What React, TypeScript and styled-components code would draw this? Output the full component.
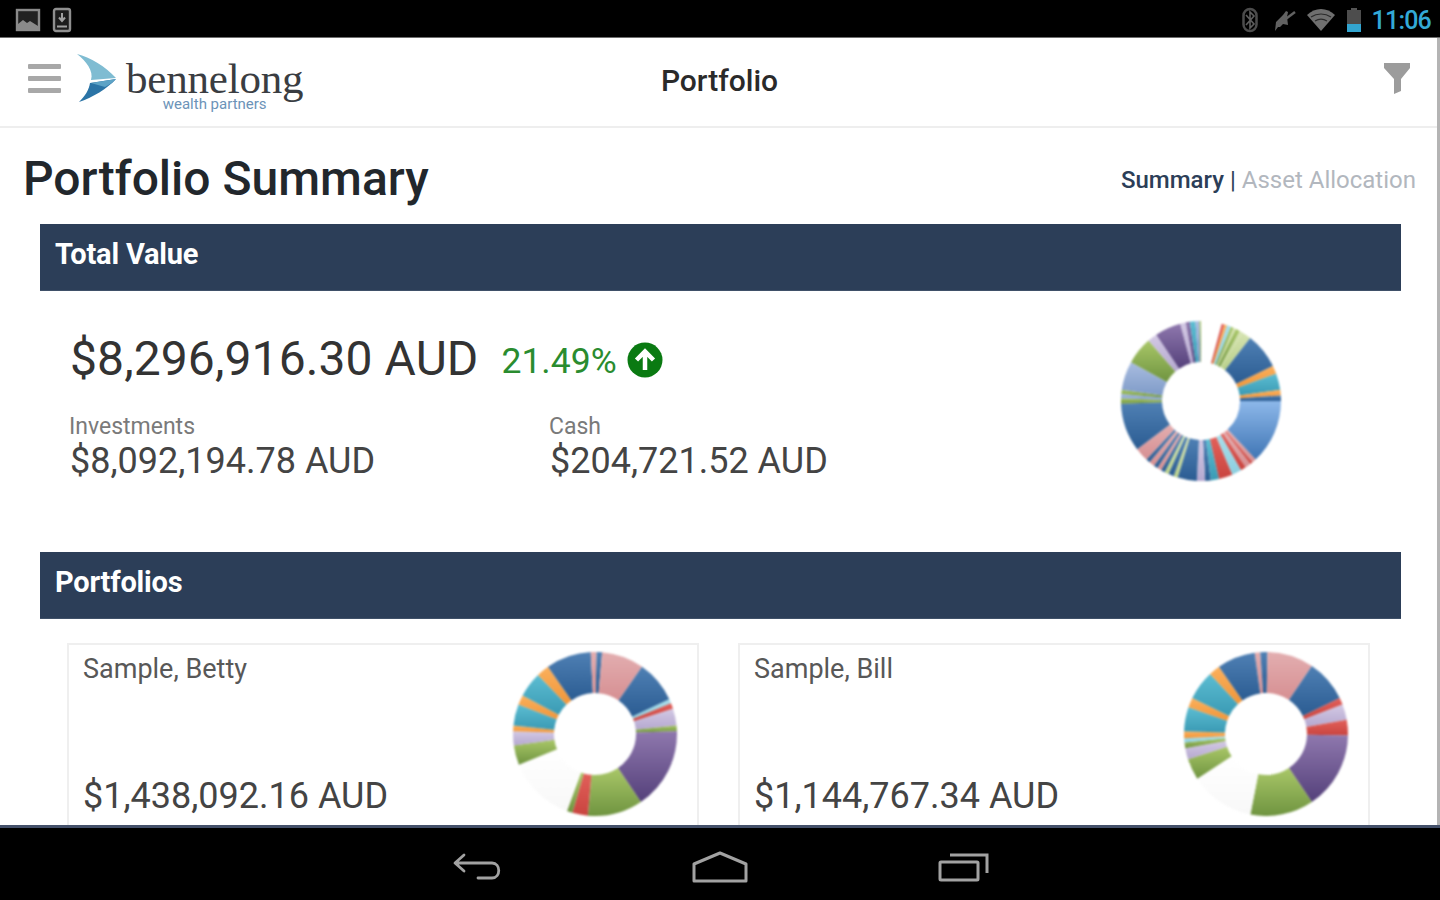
import React from "react";
import styled, { createGlobalStyle } from "styled-components";

type Slice = [number, number, string];

const palette: Record<string, [string, string]> = {
  blue: ["#4f80b4", "#2b5c92"],
  sky: ["#8db8ea", "#3f75b4"],
  peri: ["#a9bde0", "#7f9bc8"],
  pink: ["#e3aeb0", "#d68f92"],
  red: ["#e2605a", "#c9443f"],
  green: ["#a9c768", "#6f9440"],
  pale: ["#d5e3b0", "#b9d08a"],
  purple: ["#8f78ae", "#54407a"],
  lilac: ["#d3c9e4", "#b5a8d0"],
  teal: ["#5cbdd2", "#3a9ab4"],
  cyan: ["#a8deea", "#8ccfe0"],
  orange: ["#fbb05c", "#f0963a"],
  mist: ["#ffffff", "#f8f8f8"],
};

const totalSlices: Slice[] = [
  [15, 17, "red"], [17, 19, "orange"], [19, 22, "cyan"], [22, 24, "green"], [24, 26, "pale"],
  [26, 29, "green"], [29, 31, "pale"], [31, 38, "pale"], [38, 64, "blue"], [64, 70, "orange"],
  [70, 82, "teal"], [82, 86, "orange"], [86, 90, "blue"], [90, 137, "sky"], [137, 140, "pink"],
  [140, 142, "red"], [142, 146, "pink"], [146, 150, "red"], [150, 157, "cyan"], [157, 167, "red"],
  [167, 173, "teal"], [173, 177, "blue"], [177, 183, "lilac"], [183, 197, "blue"], [197, 200, "pale"],
  [200, 204, "blue"], [204, 207, "pale"], [207, 210, "blue"], [210, 213, "pink"], [213, 216, "blue"],
  [216, 220, "pink"], [220, 223, "blue"], [223, 233, "pink"], [233, 268, "blue"], [268, 272, "green"],
  [272, 275, "peri"], [275, 278, "green"], [278, 299, "peri"], [299, 319, "green"], [319, 326, "lilac"],
  [326, 345, "purple"], [345, 349, "lilac"], [349, 352, "purple"], [352, 356, "teal"], [356, 359, "peri"],
  [359, 360, "green"],
];

const bettySlices: Slice[] = [
  [1, 5, "blue"], [5, 35, "pink"], [35, 65, "blue"], [65, 68, "cyan"], [68, 72, "red"],
  [72, 84, "lilac"], [84, 88, "green"], [88, 146, "purple"], [146, 185, "green"], [185, 196, "red"],
  [196, 200, "green"], [200, 248, "mist"], [248, 262, "green"], [262, 272, "lilac"], [272, 276, "orange"],
  [276, 291, "teal"], [291, 298, "orange"], [298, 316, "teal"], [316, 325, "orange"], [325, 357, "blue"],
  [357, 361, "pink"],
];

const billSlices: Slice[] = [
  [352, 356, "pink"], [356, 361, "blue"], [1, 34, "pink"], [34, 64, "blue"], [64, 69, "red"],
  [69, 80, "lilac"], [80, 91, "red"], [91, 146, "purple"], [146, 191, "green"], [191, 237, "mist"],
  [237, 252, "green"], [252, 260, "lilac"], [260, 264, "green"], [264, 267, "cyan"], [267, 272, "orange"],
  [272, 289, "teal"], [289, 296, "orange"], [296, 317, "teal"], [317, 325, "orange"], [325, 352, "blue"],
];

const point = (cx: number, cy: number, r: number, deg: number) => {
  const a = ((deg - 90) * Math.PI) / 180;
  return `${(cx + r * Math.cos(a)).toFixed(2)} ${(cy + r * Math.sin(a)).toFixed(2)}`;
};

const slicePath = (from: number, to: number, outer: number, inner: number) => {
  const c = outer + 1;
  const large = to - from > 180 ? 1 : 0;
  return `M${point(c, c, outer, from)} A${outer} ${outer} 0 ${large} 1 ${point(c, c, outer, to)} L${point(c, c, inner, to)} A${inner} ${inner} 0 ${large} 0 ${point(c, c, inner, from)} Z`;
};

const Donut: React.FC<{ id: string; slices: Slice[]; outer: number; inner: number; small?: boolean }> = ({
  id,
  slices,
  outer,
  inner,
  small,
}) => {
  const size = outer * 2 + 2;
  return (
    <DonutSvg $lifted={small} width={size} height={size} viewBox={`0 0 ${size} ${size}`}>
      <defs>
        {Object.entries(palette).map(([name, [top, bottom]]) => (
          <linearGradient key={name} id={`${id}-${name}`} x1="0" y1="0" x2="0" y2="1">
            <stop offset="0" stopColor={top} />
            <stop offset="1" stopColor={bottom} />
          </linearGradient>
        ))}
      </defs>
      {slices.map(([from, to, color]) => (
        <path key={`${from}-${color}`} d={slicePath(from, to, outer, inner)} fill={`url(#${id}-${color})`} />
      ))}
    </DonutSvg>
  );
};

const App: React.FC = () => (
  <>
    <GlobalStyle />
    <Screen>
      <StatusBar>
        <StatusGroup>
          <svg width="28" height="26" viewBox="0 0 28 26">
            <rect x="3" y="3" width="22" height="20" fill="#222" stroke="#8a8a8a" strokeWidth="2.4" />
            <path d="M4 22v-5l5-4 4 3 3-2 8 5v3z" fill="#8a8a8a" />
          </svg>
          <svg width="20" height="26" viewBox="0 0 20 26">
            <rect x="2" y="2" width="16" height="22" rx="2" fill="#1c1c1c" stroke="#8f8f8f" strokeWidth="2.4" />
            <path d="M10 6v7M7 10.500l3 3.500 3-3.500M5 19.500h10" fill="none" stroke="#a0a0a0" strokeWidth="2" />
          </svg>
        </StatusGroup>
        <StatusGroup>
          <svg width="18" height="26" viewBox="0 0 18 26">
            <rect x="2.500" y="2" width="13" height="22" rx="6.500" fill="none" stroke="#4c4c4c" strokeWidth="2.500" />
            <path d="M5 8l8 9-4 4V5l4 4-8 9" fill="none" stroke="#5e5e5e" strokeWidth="1.600" />
          </svg>
          <MutedIcon width="26" height="26" viewBox="0 0 26 26">
            <path d="M5 24l1-9 7-7 3-4 2 1-1 5 1 8-5-1-3 3-2 0z" fill="#626262" />
            <path d="M9 17L25 5" stroke="#626262" strokeWidth="2.400" />
          </MutedIcon>
          <svg width="30" height="24" viewBox="0 0 30 24">
            <path d="M1 7C9-1 21-1 29 7L15 23z" fill="#6f6f6f" />
            <path d="M5 9c6-4 14-4 20 0M9 13c4-2.500 8-2.500 12 0" fill="none" stroke="#2b2b2b" strokeWidth="1.200" />
          </svg>
          <svg width="16" height="26" viewBox="0 0 16 26">
            <rect x="5" y="1" width="6" height="3" fill="#555" />
            <rect x="1" y="3" width="14" height="22" fill="#4d4d4d" />
            <rect x="1" y="17" width="14" height="8" fill="#33a5d0" />
          </svg>
          <Clock>11:06</Clock>
        </StatusGroup>
      </StatusBar>

      <Content>
        <AppBar>
          <BrandRow>
            <Hamburger>
              <span />
              <span />
              <span />
            </Hamburger>
            <Logo>
              <LogoMark width="42" height="50" viewBox="0 0 42 50">
                <path d="M1 1C14 4 30 14 40 25L15 27C18 18 10 8 1 1z" fill="#7fbcd2" />
                <path d="M14 30L40 26C32 35 16 45 3 49C9 43 13 37 14 30z" fill="#2b74a6" />
                <path d="M15 30L40 26C37 29 33 32 29 34z" fill="#5da3c6" />
              </LogoMark>
              <LogoText>
                <LogoName>bennelong</LogoName>
                <LogoTag>wealth partners</LogoTag>
              </LogoText>
            </Logo>
          </BrandRow>
          <AppTitle>Portfolio</AppTitle>
          <FilterSlot>
            <svg width="28" height="32" viewBox="0 0 28 32">
              <path d="M1 1h26v5l-9 11v12l-7 3V17L1 6z" fill="#9c9c9c" />
            </svg>
          </FilterSlot>
        </AppBar>

        <Main>
          <TitleRow>
            <PageTitle>Portfolio Summary</PageTitle>
            <Tabs>
              <ActiveTab>Summary</ActiveTab>
              <TabDivider> | </TabDivider>
              <span>Asset Allocation</span>
            </Tabs>
          </TitleRow>

          <SectionBar>Total Value</SectionBar>
          <TotalBody>
            <TotalFigures>
              <TotalLine>
                <TotalAmount>$8,296,916.30 AUD</TotalAmount>
                <Change>21.49%</Change>
                <svg width="36" height="36" viewBox="0 0 36 36">
                  <circle cx="18" cy="18" r="17.500" fill="#0a7a12" />
                  <path d="M18 28V10M9.500 18L18 9.500 26.500 18" fill="none" stroke="#fff" strokeWidth="4.500" />
                </svg>
              </TotalLine>
              <Breakdown>
                <Figure>
                  <FigureLabel>Investments</FigureLabel>
                  <FigureValue>$8,092,194.78 AUD</FigureValue>
                </Figure>
                <Figure>
                  <FigureLabel>Cash</FigureLabel>
                  <FigureValue>$204,721.52 AUD</FigureValue>
                </Figure>
              </Breakdown>
            </TotalFigures>
            <Donut id="total" slices={totalSlices} outer={80} inner={39} />
          </TotalBody>

          <SectionBar>Portfolios</SectionBar>
          <CardGrid>
            <Card>
              <CardText>
                <CardName>Sample, Betty</CardName>
                <CardValue>$1,438,092.16 AUD</CardValue>
              </CardText>
              <Donut id="betty" slices={bettySlices} outer={82} inner={41} small />
            </Card>
            <Card>
              <CardText>
                <CardName>Sample, Bill</CardName>
                <CardValue>$1,144,767.34 AUD</CardValue>
              </CardText>
              <Donut id="bill" slices={billSlices} outer={82} inner={41} small />
            </Card>
          </CardGrid>
        </Main>
      </Content>

      <NavBar>
        <BackIcon width="52" height="32" viewBox="0 0 52 32">
          <path d="M12 4L3 12l9 8M4 12h36c9 0 9 15 0 15H26" fill="none" stroke="#a2a2a2" strokeWidth="2.800" strokeLinecap="round" strokeLinejoin="round" />
        </BackIcon>
        <svg width="56" height="32" viewBox="0 0 56 32">
          <path d="M2 13L28 2l26 11v17H2z" fill="none" stroke="#a2a2a2" strokeWidth="3" strokeLinejoin="round" />
        </svg>
        <svg width="52" height="32" viewBox="0 0 52 32">
          <rect x="2" y="11" width="38" height="18" rx="1" fill="none" stroke="#a2a2a2" strokeWidth="3" />
          <path d="M12 4h37v18" fill="none" stroke="#a2a2a2" strokeWidth="3" />
        </svg>
      </NavBar>
    </Screen>
  </>
);

export default App;

const GlobalStyle = createGlobalStyle`
  html, body {
    margin: 0;
    background: #000;
  }
  * {
    box-sizing: border-box;
  }
`;

const Screen = styled.div`
  width: 1440px;
  height: 900px;
  display: flex;
  flex-direction: column;
  overflow: hidden;
  background: #fff;
  font-family: Roboto, "Liberation Sans", sans-serif;
`;

const StatusBar = styled.div`
  height: 38px;
  flex: none;
  display: flex;
  align-items: center;
  justify-content: space-between;
  padding: 2px 9px 0 14px;
  background: #000;
  border-bottom: 1px solid #6e6e6e;
`;

const StatusGroup = styled.div`
  display: flex;
  align-items: center;
  gap: 10px;
  svg {
    filter: blur(0.7px);
  }
`;

const MutedIcon = styled.svg`
  margin-left: 1px;
`;

const Clock = styled.span`
  color: #33a9d6;
  font-size: 25px;
  font-weight: 500;
  line-height: 1;
  letter-spacing: -0.8px;
  margin-top: 2px;
`;

const Content = styled.div`
  flex: 1;
  min-height: 0;
  display: flex;
  flex-direction: column;
  border-right: 3px solid #b4b4b4;
`;

const AppBar = styled.header`
  height: 90px;
  flex: none;
  display: grid;
  grid-template-columns: 1fr auto 1fr;
  align-items: center;
  padding: 0 26px 3px 28px;
  border-bottom: 2px solid #eeeeee;
`;

const BrandRow = styled.div`
  display: flex;
  align-items: center;
  gap: 18px;
`;

const Hamburger = styled.div`
  width: 33px;
  display: flex;
  flex-direction: column;
  gap: 7px;
  margin-top: -4px;
  span {
    height: 5px;
    background: #a8a8a8;
    border-radius: 1px;
  }
`;

const Logo = styled.div`
  display: flex;
  align-items: center;
  gap: 7px;
  margin-left: -3px;
`;

const LogoMark = styled.svg`
  filter: blur(0.5px);
  margin-top: -6px;
`;

const LogoText = styled.div`
  display: flex;
  flex-direction: column;
  align-items: center;
  margin: 7px 0 -3px 1px;
`;

const LogoName = styled.span`
  font-family: "Liberation Serif", serif;
  font-size: 43px;
  line-height: 36px;
  letter-spacing: -0.2px;
  color: #3a3d42;
`;

const LogoTag = styled.span`
  font-size: 15px;
  line-height: 14px;
  color: #6c93b8;
`;

const AppTitle = styled.h1`
  margin: 0;
  font-size: 30px;
  font-weight: 500;
  color: #2a2a2a;
`;

const FilterSlot = styled.div`
  display: flex;
  justify-content: flex-end;
  margin-top: -6px;
  svg {
    filter: blur(0.5px);
  }
`;

const Main = styled.main`
  flex: 1;
  min-height: 0;
  overflow: hidden;
  padding: 0 36px 0 40px;
`;

const TitleRow = styled.div`
  height: 96px;
  margin: 0 -15px 0 -16px;
  display: flex;
  align-items: center;
  justify-content: space-between;
  padding-top: 5px;
`;

const PageTitle = styled.h2`
  margin: 0 0 0 -1px;
  font-size: 48px;
  font-weight: 500;
  color: #22272c;
`;

const Tabs = styled.div`
  font-size: 24px;
  color: #b2b7be;
  margin-top: 3px;
`;

const ActiveTab = styled.span`
  color: #2c3e58;
  font-weight: 500;
`;

const TabDivider = styled.span`
  color: #2c3e58;
`;

const SectionBar = styled.div`
  height: 67px;
  padding: 14px 15px 0;
  background: #2c3e58;
  border-bottom: 1px solid #3f5068;
  color: #fff;
  font-size: 29px;
  line-height: 32px;
  font-weight: 700;
  letter-spacing: -0.2px;
`;

const TotalBody = styled.section`
  height: 261px;
  display: flex;
  align-items: flex-start;
  justify-content: space-between;
  padding: 29px 119px 0 29px;
`;

const TotalFigures = styled.div`
  display: flex;
  flex-direction: column;
`;

const TotalLine = styled.div`
  display: flex;
  align-items: center;
  gap: 10px;
  height: 70px;
  padding-top: 10px;
`;

const TotalAmount = styled.span`
  font-size: 48px;
  font-weight: 400;
  letter-spacing: 0.1px;
  color: #333;
  margin: -4px 13px 0 1px;
`;

const Change = styled.span`
  font-size: 35.500px;
  color: #2a8c2f;
  margin-top: 2px;
`;

const Breakdown = styled.div`
  display: flex;
  margin-top: 23px;
`;

const Figure = styled.div`
  width: 480px;
  display: flex;
  flex-direction: column;
`;

const FigureLabel = styled.span`
  font-size: 23px;
  line-height: 28px;
  color: #7a7a7a;
`;

const FigureValue = styled.span`
  font-size: 36px;
  line-height: 40px;
  color: #444;
  margin-left: 1px;
`;

const DonutSvg = styled.svg<{ $lifted?: boolean }>`
  flex: none;
  filter: blur(0.8px);
  margin: ${(p) => (p.$lifted ? "-2px -1px 0 0" : "0")};
`;

const CardGrid = styled.div`
  display: grid;
  grid-template-columns: 632px 632px;
  justify-content: space-between;
  padding: 24px 31px 0 27px;
`;

const Card = styled.article`
  height: 200px;
  display: flex;
  align-items: flex-start;
  justify-content: space-between;
  padding: 8px 20px 0 14px;
  border: 2px solid #efefef;
`;

const CardText = styled.div`
  height: 163px;
  display: flex;
  flex-direction: column;
  justify-content: space-between;
`;

const CardName = styled.span`
  font-size: 27px;
  line-height: 32px;
  color: #585858;
`;

const CardValue = styled(FigureValue)`
  margin-left: 0;
`;

const NavBar = styled.nav`
  height: 75px;
  flex: none;
  display: flex;
  align-items: center;
  justify-content: center;
  gap: 190px;
  padding-top: 6px;
  background: #000;
  border-top: 3px solid #44506a;
`;

const BackIcon = styled.svg`
  margin-left: 2px;
  margin-right: -2px;
`;
